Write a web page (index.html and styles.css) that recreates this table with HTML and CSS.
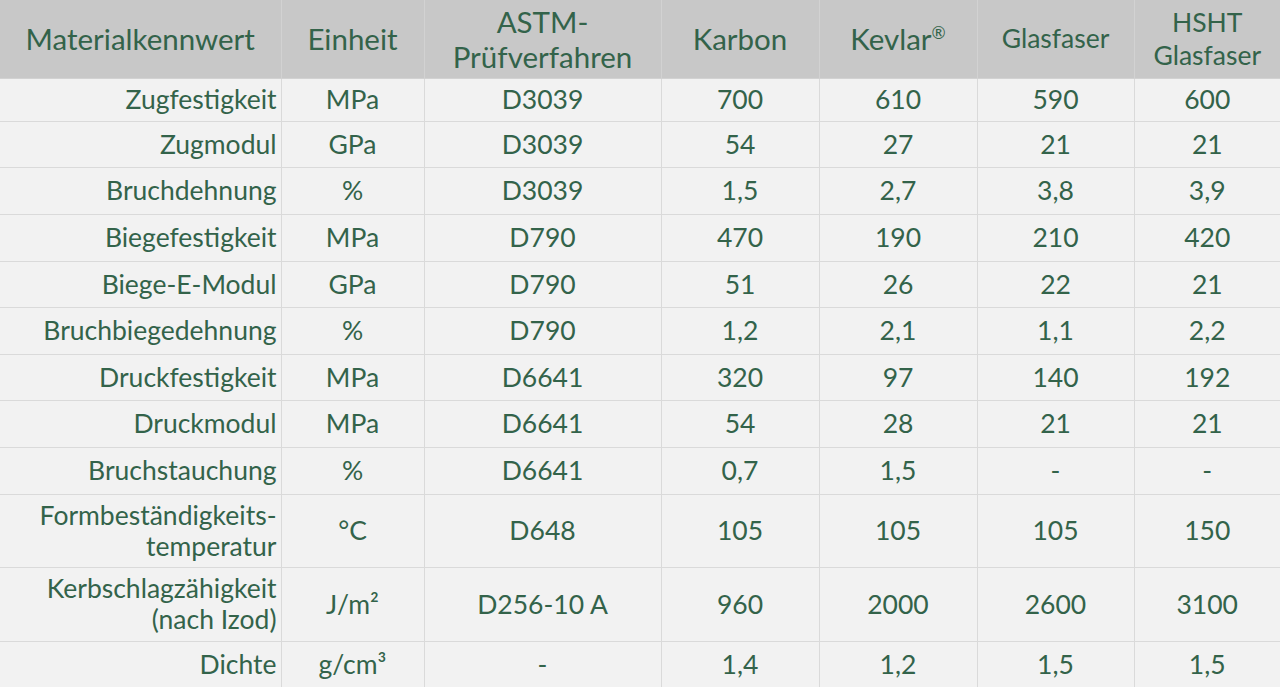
FILE: index.html
```html
<!DOCTYPE html>
<html lang="de">
<head>
<meta charset="utf-8">
<title>Materialkennwerte</title>
<link rel="stylesheet" href="styles.css">
</head>
<body>
<table class="specs">
  <colgroup>
    <col class="c1"><col class="c2"><col class="c3"><col class="c4"><col class="c5"><col class="c6"><col class="c7">
  </colgroup>
  <thead>
    <tr class="head">
      <th>Materialkennwert</th>
      <th>Einheit</th>
      <th>ASTM-<br>Prüfverfahren</th>
      <th>Karbon</th>
      <th>Kevlar<sup>®</sup></th>
      <th class="small">Glasfaser</th>
      <th class="small">HSHT<br>Glasfaser</th>
    </tr>
  </thead>
  <tbody>
    <tr class="h43"><td class="name">Zugfestigkeit</td><td>MPa</td><td>D3039</td><td>700</td><td>610</td><td>590</td><td>600</td></tr>
    <tr class="h46"><td class="name">Zugmodul</td><td>GPa</td><td>D3039</td><td>54</td><td>27</td><td>21</td><td>21</td></tr>
    <tr class="h47"><td class="name">Bruchdehnung</td><td>%</td><td>D3039</td><td>1,5</td><td>2,7</td><td>3,8</td><td>3,9</td></tr>
    <tr class="h47"><td class="name">Biegefestigkeit</td><td>MPa</td><td>D790</td><td>470</td><td>190</td><td>210</td><td>420</td></tr>
    <tr class="h46"><td class="name">Biege-E-Modul</td><td>GPa</td><td>D790</td><td>51</td><td>26</td><td>22</td><td>21</td></tr>
    <tr class="h47"><td class="name">Bruchbiegedehnung</td><td>%</td><td>D790</td><td>1,2</td><td>2,1</td><td>1,1</td><td>2,2</td></tr>
    <tr class="h46"><td class="name">Druckfestigkeit</td><td>MPa</td><td>D6641</td><td>320</td><td>97</td><td>140</td><td>192</td></tr>
    <tr class="h47"><td class="name">Druckmodul</td><td>MPa</td><td>D6641</td><td>54</td><td>28</td><td>21</td><td>21</td></tr>
    <tr class="h47"><td class="name">Bruchstauchung</td><td>%</td><td>D6641</td><td>0,7</td><td>1,5</td><td>-</td><td>-</td></tr>
    <tr class="h73"><td class="name">Formbeständigkeits-<br>temperatur</td><td>°C</td><td>D648</td><td>105</td><td>105</td><td>105</td><td>150</td></tr>
    <tr class="h74"><td class="name">Kerbschlagzähigkeit<br>(nach Izod)</td><td>J/m²</td><td>D256-10 A</td><td>960</td><td>2000</td><td>2600</td><td>3100</td></tr>
    <tr class="h46 last"><td class="name">Dichte</td><td>g/cm³</td><td>-</td><td>1,4</td><td>1,2</td><td>1,5</td><td>1,5</td></tr>
  </tbody>
</table>
</body>
</html>
```
FILE: styles.css
```css
html, body {
  margin: 0;
  padding: 0;
  background: #f2f2f2;
}
.specs {
  width: 1280px;
  border-collapse: collapse;
  table-layout: fixed;
  font-family: Lato, "Open Sans", sans-serif;
  font-weight: 400;
  color: #33634a;
}
.c1 { width: 281px; }
.c2 { width: 143px; }
.c3 { width: 237px; }
.c4 { width: 158px; }
.c5 { width: 158px; }
.c6 { width: 157px; }
.c7 { width: 146px; }
.specs th, .specs td {
  border: 1px solid #dadada;
  text-align: center;
  vertical-align: middle;
  padding: 0 4px;
}
.specs th {
  background: #c8c8c8;
  font-weight: 400;
  font-size: 29.5px;
  line-height: 35px;
  border-top: none;
  border-color: #d2d2d2;
}
.specs th.small {
  font-size: 26.5px;
  line-height: 33px;
}
.specs th sup {
  font-size: 17px;
  vertical-align: 11px;
  line-height: 0;
}
.head { height: 78px; }
.specs td {
  background: #f2f2f2;
  font-size: 26.5px;
  line-height: 31px;
}
.specs td.name {
  text-align: right;
  padding-right: 4px;
  border-left: none;
}
.specs th:first-child { border-left: none; }
.specs th:last-child, .specs td:last-child { border-right: none; }
.h43 { height: 43px; }
.h46 { height: 46px; }
.h47 { height: 47px; }
.h73 { height: 73px; }
.h74 { height: 74px; }
.last td { border-bottom: none; }
```
